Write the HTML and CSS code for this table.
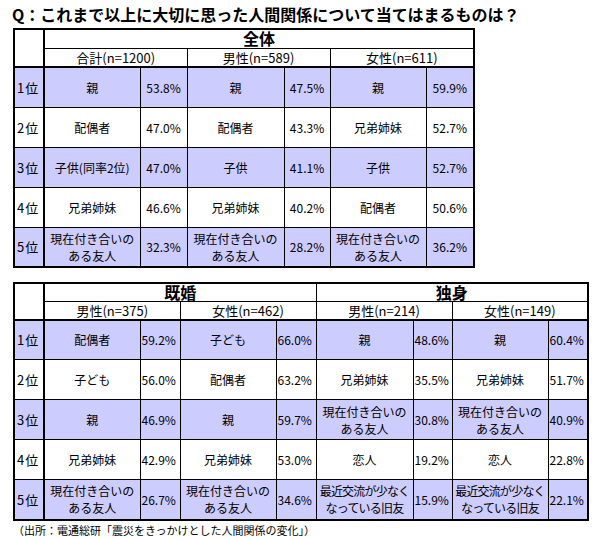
FILE: index.html
```html
<!DOCTYPE html>
<html lang="ja">
<head>
<meta charset="utf-8">
<title>人間関係</title>
<link rel="stylesheet" href="styles.css">
</head>
<body>
<div class="page">
  <h1 class="title">Q：これまで以上に大切に思った人間関係について当てはまるものは？</h1>

  <table class="grid t1">
    <colgroup>
      <col class="c-rank"><col class="c-n1"><col class="c-p1"><col class="c-n2"><col class="c-p2"><col class="c-n3"><col class="c-p3">
    </colgroup>
    <tr class="h1">
      <td class="corner" rowspan="2"></td>
      <td class="grp" colspan="6">全体</td>
    </tr>
    <tr class="h2">
      <td colspan="2">合計(n=1200)</td>
      <td colspan="2">男性(n=589)</td>
      <td colspan="2">女性(n=611)</td>
    </tr>
    <tr class="row hl">
      <td class="rank">1位</td><td class="name">親</td><td class="pct">53.8%</td><td class="name">親</td><td class="pct">47.5%</td><td class="name">親</td><td class="pct">59.9%</td>
    </tr>
    <tr class="row">
      <td class="rank">2位</td><td class="name">配偶者</td><td class="pct">47.0%</td><td class="name">配偶者</td><td class="pct">43.3%</td><td class="name">兄弟姉妹</td><td class="pct">52.7%</td>
    </tr>
    <tr class="row hl">
      <td class="rank">3位</td><td class="name">子供(同率2位)</td><td class="pct">47.0%</td><td class="name">子供</td><td class="pct">41.1%</td><td class="name">子供</td><td class="pct">52.7%</td>
    </tr>
    <tr class="row">
      <td class="rank">4位</td><td class="name">兄弟姉妹</td><td class="pct">46.6%</td><td class="name">兄弟姉妹</td><td class="pct">40.2%</td><td class="name">配偶者</td><td class="pct">50.6%</td>
    </tr>
    <tr class="row hl last">
      <td class="rank">5位</td><td class="name">現在付き合いの<br>ある友人</td><td class="pct">32.3%</td><td class="name">現在付き合いの<br>ある友人</td><td class="pct">28.2%</td><td class="name">現在付き合いの<br>ある友人</td><td class="pct">36.2%</td>
    </tr>
  </table>

  <table class="grid t2">
    <colgroup>
      <col class="d-rank"><col class="d-n"><col class="d-p"><col class="d-n"><col class="d-p"><col class="d-n3"><col class="d-p3"><col class="d-n"><col class="d-p">
    </colgroup>
    <tr class="h1">
      <td class="corner" rowspan="2"></td>
      <td class="grp" colspan="4">既婚</td>
      <td class="grp" colspan="4">独身</td>
    </tr>
    <tr class="h2">
      <td colspan="2">男性(n=375)</td>
      <td colspan="2">女性(n=462)</td>
      <td colspan="2">男性(n=214)</td>
      <td colspan="2">女性(n=149)</td>
    </tr>
    <tr class="row hl">
      <td class="rank">1位</td><td class="name">配偶者</td><td class="pct">59.2%</td><td class="name">子ども</td><td class="pct">66.0%</td><td class="name">親</td><td class="pct">48.6%</td><td class="name">親</td><td class="pct">60.4%</td>
    </tr>
    <tr class="row">
      <td class="rank">2位</td><td class="name">子ども</td><td class="pct">56.0%</td><td class="name">配偶者</td><td class="pct">63.2%</td><td class="name">兄弟姉妹</td><td class="pct">35.5%</td><td class="name">兄弟姉妹</td><td class="pct">51.7%</td>
    </tr>
    <tr class="row hl">
      <td class="rank">3位</td><td class="name">親</td><td class="pct">46.9%</td><td class="name">親</td><td class="pct">59.7%</td><td class="name">現在付き合いの<br>ある友人</td><td class="pct">30.8%</td><td class="name">現在付き合いの<br>ある友人</td><td class="pct">40.9%</td>
    </tr>
    <tr class="row">
      <td class="rank">4位</td><td class="name">兄弟姉妹</td><td class="pct">42.9%</td><td class="name">兄弟姉妹</td><td class="pct">53.0%</td><td class="name">恋人</td><td class="pct">19.2%</td><td class="name">恋人</td><td class="pct">22.8%</td>
    </tr>
    <tr class="row hl last">
      <td class="rank">5位</td><td class="name">現在付き合いの<br>ある友人</td><td class="pct">26.7%</td><td class="name">現在付き合いの<br>ある友人</td><td class="pct">34.6%</td><td class="name tight">最近交流が少なく<br>なっている旧友</td><td class="pct">15.9%</td><td class="name tight">最近交流が少なく<br>なっている旧友</td><td class="pct">22.1%</td>
    </tr>
  </table>

  <p class="source">（出所：電通総研「震災をきっかけとした人間関係の変化」）</p>
</div>
</body>
</html>
```

FILE: styles.css
```css
html, body {
  margin: 0;
  padding: 0;
  background: #ffffff;
}

body {
  font-family: "Noto Sans CJK JP", "Noto Sans", sans-serif;
  color: #000000;
}

.page {
  padding: 4px 0 0 12px;
}

.title {
  margin: 0;
  font-size: 16px;
  font-weight: bold;
  line-height: 20px;
  height: 24px;
  white-space: nowrap;
}

.grid {
  border-collapse: collapse;
  table-layout: fixed;
  border: 2px solid #000;
  margin-left: 1px;
}

.grid td {
  border: 1px solid #000;
  padding: 0;
  text-align: center;
  vertical-align: middle;
  white-space: nowrap;
  font-size: 12px;
  line-height: 17px;
}

.t1 { width: 460px; }
.t2 { width: 574px; margin-top: 14px; }

.c-rank { width: 30px; }
.c-n1 { width: 96px; }
.c-p1 { width: 47px; }
.c-n2 { width: 97px; }
.c-p2 { width: 46px; }
.c-n3 { width: 96px; }
.c-p3 { width: 48px; }

.d-rank { width: 30px; }
.d-n { width: 96px; }
.d-p { width: 40px; }
.d-n3 { width: 97px; }
.d-p3 { width: 39px; }

.grid .corner {
  border-right: 2px solid #000;
  border-bottom: 2px solid #000;
}

.h1 { height: 19px; }
.t2 .h1 { height: 18px; }

.grid .grp {
  font-size: 16px;
  font-weight: bold;
  line-height: 17px;
  border-bottom: 1px solid #000;
}

.h2 { height: 19px; }
.t2 .h2 { height: 18px; }

.grid .h2 td {
  font-size: 13px;
  line-height: 16px;
  border-bottom: 2px solid #000;
  vertical-align: bottom;
}

.row { height: 40px; }

.hl td { background: #ccccff; }

.grid .rank {
  text-align: left;
  padding-left: 2px;
  font-size: 13px;
  letter-spacing: 1px;
  border-right: 2px solid #000;
  font-variant-numeric: tabular-nums;
}

.t2 .pct {
  text-align: left;
  padding-left: 1px;
}

.grid .tight {
  letter-spacing: -0.8px;
}

.source {
  margin: 1px 0 0 1px;
  font-size: 11px;
  line-height: 16px;
  white-space: nowrap;
}
```
